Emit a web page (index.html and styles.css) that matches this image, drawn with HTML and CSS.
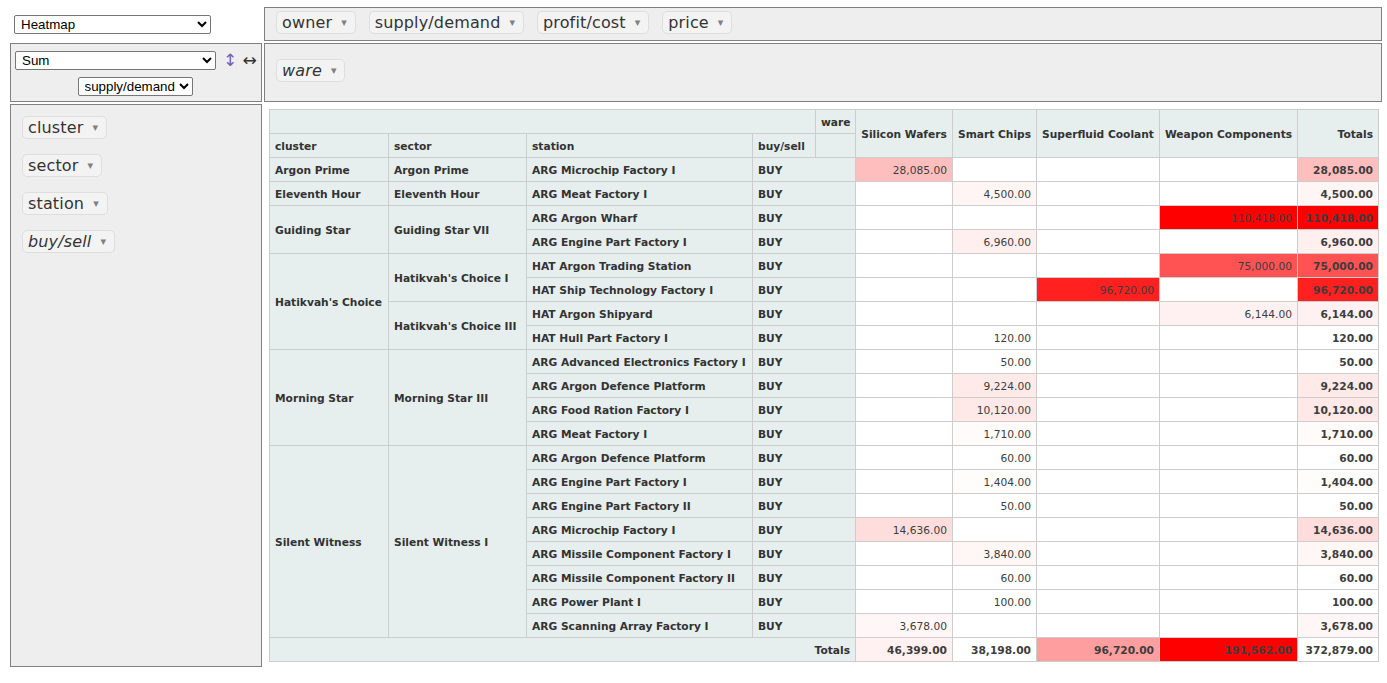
FILE: index.html
```html
<!DOCTYPE html>
<html>
<head>
<meta charset="utf-8">
<title>Pivot</title>
<link rel="stylesheet" href="styles.css">
</head>
<body>
<div class="pvt-ui">
  <div class="renderer-cell">
    <select class="sel sel-renderer"><option>Heatmap</option><option>Table</option></select>
  </div>
  <div class="axis axis-unused">
    <span class="attr">owner<span class="tri">▾</span></span>
    <span class="attr">supply/demand<span class="tri">▾</span></span>
    <span class="attr">profit/cost<span class="tri">▾</span></span>
    <span class="attr">price<span class="tri">▾</span></span>
  </div>
  <div class="vals">
    <div class="agg-line">
      <select class="sel sel-agg"><option>Sum</option><option>Count</option></select>
      <a class="order order-row">↕</a>
      <a class="order order-col">↔</a>
    </div>
    <div class="agg-field">
      <select class="sel sel-field"><option>supply/demand</option><option>price</option></select>
    </div>
  </div>
  <div class="axis axis-cols">
    <span class="attr filtered">ware<span class="tri">▾</span></span>
  </div>
  <div class="axis axis-rows">
    <span class="attr">cluster<span class="tri">▾</span></span>
    <span class="attr">sector<span class="tri">▾</span></span>
    <span class="attr">station<span class="tri">▾</span></span>
    <span class="attr filtered">buy/sell<span class="tri">▾</span></span>
  </div>
  <div class="renderer-area">
    <table class="pvt-table">
      <colgroup>
        <col class="w-cluster"><col class="w-sector"><col class="w-station"><col class="w-bs"><col class="w-ware">
        <col class="w-sw"><col class="w-sc"><col class="w-sfc"><col class="w-wc"><col class="w-tot">
      </colgroup>
      <thead>
        <tr>
          <th colspan="4"></th>
          <th class="axis-label">ware</th>
          <th class="col-label" rowspan="2">Silicon Wafers</th>
          <th class="col-label" rowspan="2">Smart Chips</th>
          <th class="col-label" rowspan="2">Superfluid Coolant</th>
          <th class="col-label" rowspan="2">Weapon Components</th>
          <th class="total-label" rowspan="2">Totals</th>
        </tr>
        <tr>
          <th>cluster</th><th>sector</th><th>station</th><th>buy/sell</th><th></th>
        </tr>
      </thead>
      <tbody>
        <tr>
          <th>Argon Prime</th><th>Argon Prime</th><th>ARG Microchip Factory I</th><th colspan="2">BUY</th>
          <td style="background-color: rgb(255,190,190)">28,085.00</td><td></td><td></td><td></td>
          <td class="total" style="background-color: rgb(255,190,190)">28,085.00</td>
        </tr>
        <tr>
          <th>Eleventh Hour</th><th>Eleventh Hour</th><th>ARG Meat Factory I</th><th colspan="2">BUY</th>
          <td></td><td style="background-color: rgb(255,245,245)">4,500.00</td><td></td><td></td>
          <td class="total" style="background-color: rgb(255,245,245)">4,500.00</td>
        </tr>
        <tr>
          <th rowspan="2">Guiding Star</th><th rowspan="2">Guiding Star VII</th><th>ARG Argon Wharf</th><th colspan="2">BUY</th>
          <td></td><td></td><td></td><td style="background-color: rgb(255,0,0)">110,418.00</td>
          <td class="total" style="background-color: rgb(255,0,0)">110,418.00</td>
        </tr>
        <tr>
          <th>ARG Engine Part Factory I</th><th colspan="2">BUY</th>
          <td></td><td style="background-color: rgb(255,239,239)">6,960.00</td><td></td><td></td>
          <td class="total" style="background-color: rgb(255,239,239)">6,960.00</td>
        </tr>
        <tr>
          <th rowspan="4">Hatikvah's Choice</th><th rowspan="2">Hatikvah's Choice I</th><th>HAT Argon Trading Station</th><th colspan="2">BUY</th>
          <td></td><td></td><td></td><td style="background-color: rgb(255,82,82)">75,000.00</td>
          <td class="total" style="background-color: rgb(255,82,82)">75,000.00</td>
        </tr>
        <tr>
          <th>HAT Ship Technology Factory I</th><th colspan="2">BUY</th>
          <td></td><td></td><td style="background-color: rgb(255,32,32)">96,720.00</td><td></td>
          <td class="total" style="background-color: rgb(255,32,32)">96,720.00</td>
        </tr>
        <tr>
          <th rowspan="2">Hatikvah's Choice III</th><th>HAT Argon Shipyard</th><th colspan="2">BUY</th>
          <td></td><td></td><td></td><td style="background-color: rgb(255,241,241)">6,144.00</td>
          <td class="total" style="background-color: rgb(255,241,241)">6,144.00</td>
        </tr>
        <tr>
          <th>HAT Hull Part Factory I</th><th colspan="2">BUY</th>
          <td></td><td style="background-color: rgb(255,255,255)">120.00</td><td></td><td></td>
          <td class="total" style="background-color: rgb(255,255,255)">120.00</td>
        </tr>
        <tr>
          <th rowspan="4">Morning Star</th><th rowspan="4">Morning Star III</th><th>ARG Advanced Electronics Factory I</th><th colspan="2">BUY</th>
          <td></td><td style="background-color: rgb(255,255,255)">50.00</td><td></td><td></td>
          <td class="total" style="background-color: rgb(255,255,255)">50.00</td>
        </tr>
        <tr>
          <th>ARG Argon Defence Platform</th><th colspan="2">BUY</th>
          <td></td><td style="background-color: rgb(255,234,234)">9,224.00</td><td></td><td></td>
          <td class="total" style="background-color: rgb(255,234,234)">9,224.00</td>
        </tr>
        <tr>
          <th>ARG Food Ration Factory I</th><th colspan="2">BUY</th>
          <td></td><td style="background-color: rgb(255,232,232)">10,120.00</td><td></td><td></td>
          <td class="total" style="background-color: rgb(255,232,232)">10,120.00</td>
        </tr>
        <tr>
          <th>ARG Meat Factory I</th><th colspan="2">BUY</th>
          <td></td><td style="background-color: rgb(255,251,251)">1,710.00</td><td></td><td></td>
          <td class="total" style="background-color: rgb(255,251,251)">1,710.00</td>
        </tr>
        <tr>
          <th rowspan="8">Silent Witness</th><th rowspan="8">Silent Witness I</th><th>ARG Argon Defence Platform</th><th colspan="2">BUY</th>
          <td></td><td style="background-color: rgb(255,255,255)">60.00</td><td></td><td></td>
          <td class="total" style="background-color: rgb(255,255,255)">60.00</td>
        </tr>
        <tr>
          <th>ARG Engine Part Factory I</th><th colspan="2">BUY</th>
          <td></td><td style="background-color: rgb(255,252,252)">1,404.00</td><td></td><td></td>
          <td class="total" style="background-color: rgb(255,252,252)">1,404.00</td>
        </tr>
        <tr>
          <th>ARG Engine Part Factory II</th><th colspan="2">BUY</th>
          <td></td><td style="background-color: rgb(255,255,255)">50.00</td><td></td><td></td>
          <td class="total" style="background-color: rgb(255,255,255)">50.00</td>
        </tr>
        <tr>
          <th>ARG Microchip Factory I</th><th colspan="2">BUY</th>
          <td style="background-color: rgb(255,221,221)">14,636.00</td><td></td><td></td><td></td>
          <td class="total" style="background-color: rgb(255,221,221)">14,636.00</td>
        </tr>
        <tr>
          <th>ARG Missile Component Factory I</th><th colspan="2">BUY</th>
          <td></td><td style="background-color: rgb(255,246,246)">3,840.00</td><td></td><td></td>
          <td class="total" style="background-color: rgb(255,246,246)">3,840.00</td>
        </tr>
        <tr>
          <th>ARG Missile Component Factory II</th><th colspan="2">BUY</th>
          <td></td><td style="background-color: rgb(255,255,255)">60.00</td><td></td><td></td>
          <td class="total" style="background-color: rgb(255,255,255)">60.00</td>
        </tr>
        <tr>
          <th>ARG Power Plant I</th><th colspan="2">BUY</th>
          <td></td><td style="background-color: rgb(255,255,255)">100.00</td><td></td><td></td>
          <td class="total" style="background-color: rgb(255,255,255)">100.00</td>
        </tr>
        <tr>
          <th>ARG Scanning Array Factory I</th><th colspan="2">BUY</th>
          <td style="background-color: rgb(255,247,247)">3,678.00</td><td></td><td></td><td></td>
          <td class="total" style="background-color: rgb(255,247,247)">3,678.00</td>
        </tr>
        <tr>
          <th class="total-label" colspan="5">Totals</th>
          <td class="total" style="background-color: rgb(255,241,241)">46,399.00</td>
          <td class="total" style="background-color: rgb(255,255,255)">38,198.00</td>
          <td class="total" style="background-color: rgb(255,158,158)">96,720.00</td>
          <td class="total" style="background-color: rgb(255,0,0)">191,562.00</td>
          <td class="total">372,879.00</td>
        </tr>
      </tbody>
    </table>
  </div>
</div>
</body>
</html>
```

FILE: styles.css
```css
html, body {
  margin: 0;
  padding: 0;
  background: #fff;
}

body {
  font-family: "DejaVu Sans", Verdana, sans-serif;
  color: #333;
}

.pvt-ui {
  display: grid;
  grid-template-columns: 252px 1118px;
  grid-template-rows: 34px 59px auto;
  gap: 2px;
  margin: 7px 0 0 10px;
}

.sel {
  font-family: "Liberation Sans", Arial, sans-serif;
  font-size: 13.33px;
  color: #000;
  height: 19px;
  box-sizing: border-box;
  border: 1px solid #767676;
  border-radius: 2px;
  background: #fff;
  padding: 0 0 0 2px;
}

.renderer-cell {
  padding: 7px 0 0 4px;
}

.sel-renderer {
  width: 197px;
  height: 19px;
}

.axis {
  border: 1px solid #808080;
  background: #eee;
  box-sizing: border-box;
}

.axis-unused {
  display: flex;
  align-items: flex-start;
  gap: 13px;
  padding: 3px 0 0 11px;
}

.axis-cols {
  display: flex;
  align-items: flex-start;
  padding: 15px 0 0 11px;
}

.axis-rows {
  display: flex;
  flex-direction: column;
  align-items: flex-start;
  gap: 15px;
  padding: 11px 0 0 11px;
}

.attr {
  display: inline-flex;
  align-items: center;
  height: 23px;
  box-sizing: border-box;
  background: #f3f3f3;
  border: 1px solid #dedede;
  border-radius: 5px;
  padding: 0 5px;
  font-size: 16px;
  line-height: 17px;
  letter-spacing: 0.15px;
  white-space: nowrap;
  color: #333;
}

.attr.filtered {
  font-style: italic;
}

.tri {
  color: #808080;
  font-style: normal;
  font-size: 11px;
  letter-spacing: 0;
  margin-left: 9px;
  margin-right: 3px;
}

.vals {
  border: 1px solid #808080;
  background: #eee;
  box-sizing: border-box;
  padding: 7px 0 0 4px;
}

.agg-line {
  display: flex;
  align-items: center;
  height: 19px;
}

.sel-agg {
  width: 201px;
}

.order {
  display: inline-block;
  line-height: 19px;
  cursor: pointer;
  text-align: center;
}

.order-row {
  color: #7a5fae;
  font-size: 17px;
  margin-left: 7px;
  width: 10px;
}

.order-col {
  color: #333;
  font-size: 17px;
  margin-left: 8px;
  width: 17px;
}

.agg-field {
  display: flex;
  justify-content: center;
  padding: 7px 6px 0 0;
}

.sel-field {
  width: 115px;
}

.renderer-area {
  padding: 5px;
}

.pvt-table {
  border-collapse: collapse;
  table-layout: fixed;
  width: 1110px;
  font-size: 10.67px;
  line-height: 13px;
  text-align: left;
}

.w-cluster { width: 119px; }
.w-sector { width: 138px; }
.w-station { width: 226px; }
.w-bs { width: 63px; }
.w-ware { width: 40px; }
.w-sw { width: 97px; }
.w-sc { width: 84px; }
.w-sfc { width: 123px; }
.w-wc { width: 138px; }
.w-tot { width: 81px; }

.pvt-table th {
  background-color: #e6eeee;
  border: 1px solid #cdcdcd;
  padding: 6px 5px 4px;
  font-weight: bold;
  color: #333;
  text-align: left;
  vertical-align: middle;
  white-space: nowrap;
  overflow: hidden;
}

.pvt-table th.col-label {
  text-align: center;
}

.pvt-table th.total-label {
  text-align: right;
}

.pvt-table th.axis-label {
  text-align: left;
}

.pvt-table td {
  color: #3d3d3d;
  padding: 6px 5px 4px;
  background-color: #fff;
  border: 1px solid #cdcdcd;
  vertical-align: top;
  text-align: right;
  white-space: nowrap;
  overflow: hidden;
}

.pvt-table td.total {
  font-weight: bold;
}
```
